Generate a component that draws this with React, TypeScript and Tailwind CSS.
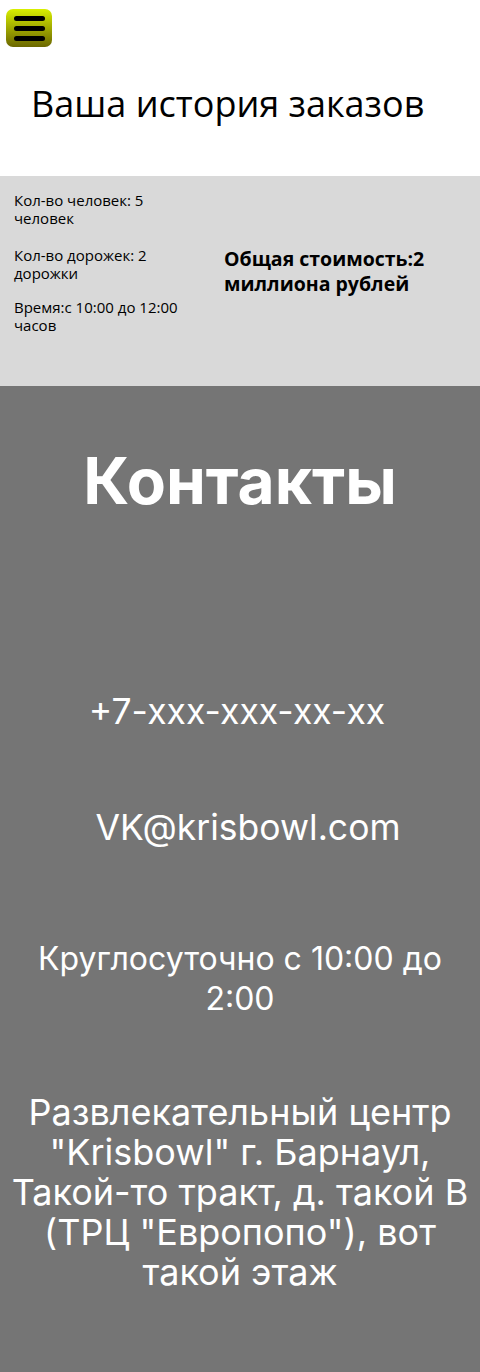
export default function App() {
  return (
    <div className="w-[480px] min-h-[1372px] flex flex-col bg-white">
      <header className="h-[176px] font-['Open_Sans',sans-serif] text-black">
        <button className="ml-[6px] mt-[9px] w-[46px] h-[38px] rounded-[7px] bg-linear-to-b from-[#d9f000] to-[#6b6700] flex flex-col items-center pt-[7px] gap-[5px]">
          <span className="block w-[31px] h-[5px] rounded-full bg-black" />
          <span className="block w-[31px] h-[5px] rounded-full bg-black" />
          <span className="block w-[31px] h-[5px] rounded-full bg-black" />
        </button>
        <h1 className="ml-[31px] mt-[30px] text-[36px] font-normal">Ваша история заказов</h1>
      </header>

      <section className="h-[210px] bg-[#d9d9d9] flex font-['Open_Sans',sans-serif] text-black">
        <div className="w-[182px] pl-[14px] pt-[15px] text-[15px] leading-[18px]">
          <p>Кол-во человек: 5 человек</p>
          <p className="mt-[19px]">Кол-во дорожек: 2 дорожки</p>
          <p className="mt-[16px]">Время:с 10:00 до 12:00 часов</p>
        </div>
        <div className="pl-[42px] pt-[70px] w-[270px] text-[19.5px] font-bold leading-[25px]">
          Общая стоимость:2 миллиона рублей
        </div>
      </section>

      <section className="flex-1 bg-[#757575] text-white font-['Inter',sans-serif] text-center px-[4px] pb-[60px]">
        <h2 className="mt-[47px] text-[64px] font-bold">Контакты</h2>
        <p className="mt-[156px] text-[35.5px] pr-[6px]">+7-xxx-xxx-xx-xx</p>
        <p className="mt-[63px] text-[35.5px] pl-[16px]">VK@krisbowl.com</p>
        <p className="mt-[84px] text-[32px] leading-[40px]">Круглосуточно с 10:00 до 2:00</p>
        <p className="mt-[73px] text-[36px] leading-[40px]">
          Развлекательный центр "Krisbowl" г. Барнаул, Такой-то тракт, д. такой В (ТРЦ "Европопо"), вот такой этаж
        </p>
      </section>
    </div>
  );
}
